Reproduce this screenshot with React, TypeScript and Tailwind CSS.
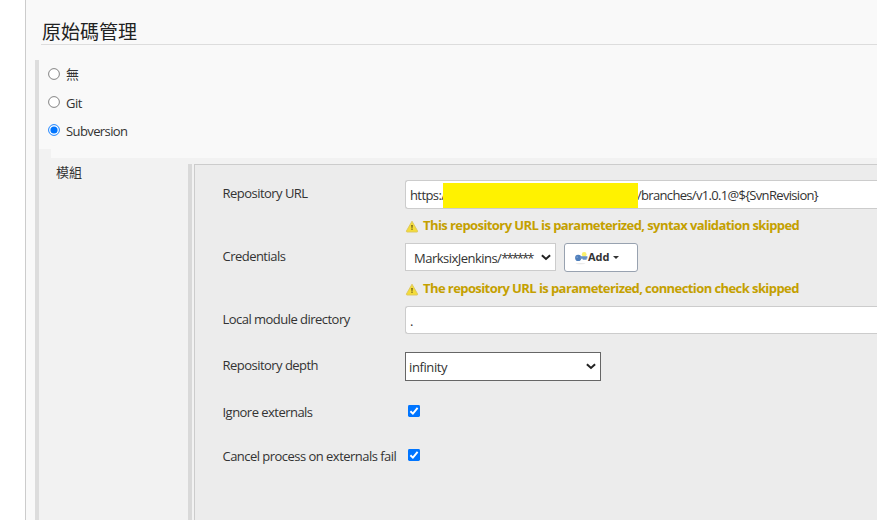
import type { ReactNode } from 'react';

function Radio({ checked }: { checked?: boolean }) {
  return (
    <svg width="12" height="12" viewBox="0 0 12 12" className="shrink-0">
      <circle cx="6" cy="6" r="5.4" fill="#fff" stroke={checked ? '#0075ff' : '#767676'} strokeWidth="0.9" />
      {checked && <circle cx="6" cy="6" r="3.6" fill="#0075ff" />}
    </svg>
  );
}

function Check() {
  return (
    <svg width="12" height="12" viewBox="0 0 12 12" className="shrink-0">
      <rect width="12" height="12" rx="1.4" fill="#0075ff" />
      <path d="M2.4 6.3 L4.9 8.7 L9.6 2.9" fill="none" stroke="#fff" strokeWidth="1.9" />
    </svg>
  );
}

function Chevron() {
  return (
    <svg width="10" height="7" viewBox="0 0 10 7" className="shrink-0">
      <path d="M0.9 1.2 L5 5 L9.1 1.2" fill="none" stroke="#222" strokeWidth="2" />
    </svg>
  );
}

function WarningIcon() {
  return (
    <svg width="14" height="13" viewBox="0 0 14 13" className="shrink-0">
      <path d="M7 1.2 L12.6 11 Q12.8 12 12 12 L2 12 Q1.2 12 1.4 11 Z" fill="#f4dc3a" stroke="#dcc65c" strokeWidth="0.9" strokeLinejoin="round" />
      <path d="M6.2 5 L7.8 5 L7.4 8.4 L6.6 8.4 Z" fill="#6b5d14" />
      <rect x="6.4" y="8.8" width="1.2" height="1.1" fill="#6b5d14" />
    </svg>
  );
}

function KeyIcon() {
  return (
    <svg width="14" height="14" viewBox="0 0 14 14" className="shrink-0">
      <ellipse cx="6.5" cy="12.6" rx="5" ry="0.7" fill="#e8e8e8" />
      <circle cx="10.2" cy="3.4" r="2.4" fill="#fbf06a" />
      <circle cx="4.2" cy="6.9" r="3.1" fill="#4f7fbc" />
      <path d="M6 5.2 H13.4 V7.4 H12.6 V8.8 H8.7 V7.8 H6 Z" fill="#6690c4" />
      <circle cx="3.2" cy="6.2" r="0.9" fill="#7399cb" />
    </svg>
  );
}

function Row({ label, height, lineHeight = 'leading-[26px]', children }: { label: string; height: string; lineHeight?: string; children: ReactNode }) {
  return (
    <div className={`flex ${height}`}>
      <div className={`w-[183px] shrink-0 whitespace-nowrap pl-[0.5px] tracking-[-0.53px] ${lineHeight}`}>{label}</div>
      <div className="min-w-0 flex-1">{children}</div>
    </div>
  );
}

function Warning({ text }: { text: string }) {
  return (
    <div className="flex h-[34px] items-center whitespace-nowrap font-bold text-[#c4a000]">
      <WarningIcon />
      <span className="ml-[4px] tracking-[-0.58px]">{text}</span>
    </div>
  );
}

export default function App() {
  return (
    <div className="flex h-[520px] w-[877px] overflow-hidden bg-white font-['Open_Sans','Noto_Sans_CJK_TC',sans-serif] text-[13px] text-[#333]">
      <div className="ml-[25px] flex w-full flex-col border-l border-[#ccc] bg-[#f9f9f9]">
        <h2 className="ml-[15px] flex h-[45px] shrink-0 items-end border-b border-[#ddd] pl-px text-[19px] font-normal leading-[23px] text-[#222]">
          原始碼管理
        </h2>
        <div className="mt-[15px] ml-[9px] flex min-h-0 flex-1 border-l-4 border-[#ddd]">
          <div className="flex min-w-0 flex-1 flex-col">
            <div className="flex h-[89px] flex-col pl-[9px]">
              <div className="flex h-[28px] items-center gap-[6px]">
                <Radio />
                <span className="mt-[2px]">無</span>
              </div>
              <div className="flex h-[28px] items-center gap-[6px]">
                <Radio />
                <span className="mt-[3px] tracking-[-0.5px]">Git</span>
              </div>
              <div className="flex h-[28px] items-center gap-[6px]">
                <Radio checked />
                <span className="mt-[3px] tracking-[-0.6px]">Subversion</span>
              </div>
            </div>
            <div className="h-[9px] w-[12px] shrink-0 bg-[#f2f2f2]" />
            <div className="flex min-h-0 flex-1 bg-[#f2f2f2]">
              <div className="w-[149px] shrink-0 pt-[4px] pl-[17px] leading-[20px]">模組</div>
              <div className="mt-[6px] flex min-w-0 flex-1 border-l-4 border-[#d9d9d9] pl-[2px]">
                <div className="min-w-0 flex-1 border-t border-l border-[#ccc] bg-[#ececec] pt-[15px] pl-[27px]">
                  <Row label="Repository URL" height="h-[63px]">
                    <div className="flex h-[29px] items-center rounded-l-[3px] border border-r-0 border-[#ccc] bg-white pt-[2px] pl-[4px] whitespace-nowrap">
                      <div className="w-[33px] shrink-0 tracking-[-0.6px]">https:/</div>
                      <div className="relative h-[25px] w-[195px] shrink-0 bg-[#fff200]" />
                      <div className="-ml-px tracking-[-0.68px]">/branches/v1.0.1@$&#123;SvnRevision&#125;</div>
                    </div>
                    <Warning text="This repository URL is parameterized, syntax validation skipped" />
                  </Row>
                  <Row label="Credentials" height="h-[63px]">
                    <div className="flex h-[29px]">
                      <div className="flex h-[28px] w-[151px] items-center justify-between border border-[#ccc] bg-white pr-[4px] pl-[8px]">
                        <span className="mt-[3px] tracking-[-0.52px]">MarksixJenkins/<span className="tracking-[-2px]">******</span></span>
                        <Chevron />
                      </div>
                      <div className="ml-[8px] flex h-[29px] w-[74px] items-center rounded-[3px] border border-[#98a2b0] bg-white pl-[9px] text-[11px] font-bold">
                        <KeyIcon />
                        <span>Add</span>
                        <div className="ml-[3px] border-x-[3px] border-t-[3px] border-x-transparent border-t-[#333]" />
                      </div>
                    </div>
                    <Warning text="The repository URL is parameterized, connection check skipped" />
                  </Row>
                  <Row label="Local module directory" height="h-[46px]">
                    <div className="flex h-[28px] items-center rounded-l-[3px] border border-r-0 border-[#ccc] bg-white pt-[3px] pl-[4px]">.</div>
                  </Row>
                  <Row label="Repository depth" height="h-[46px]">
                    <div className="flex h-[29px] w-[196px] items-center justify-between border border-[#666] bg-white pr-[4px] pl-[3px]">
                      <span className="mt-[2px] tracking-[-0.4px]">infinity</span>
                      <Chevron />
                    </div>
                  </Row>
                  <Row label="Ignore externals" height="h-[44px]" lineHeight="leading-[28px]">
                    <div className="pt-[7px] pl-[3px]"><Check /></div>
                  </Row>
                  <Row label="Cancel process on externals fail" height="h-[44px]" lineHeight="leading-[28px]">
                    <div className="pt-[7px] pl-[3px]"><Check /></div>
                  </Row>
                </div>
              </div>
            </div>
          </div>
        </div>
      </div>
    </div>
  );
}
